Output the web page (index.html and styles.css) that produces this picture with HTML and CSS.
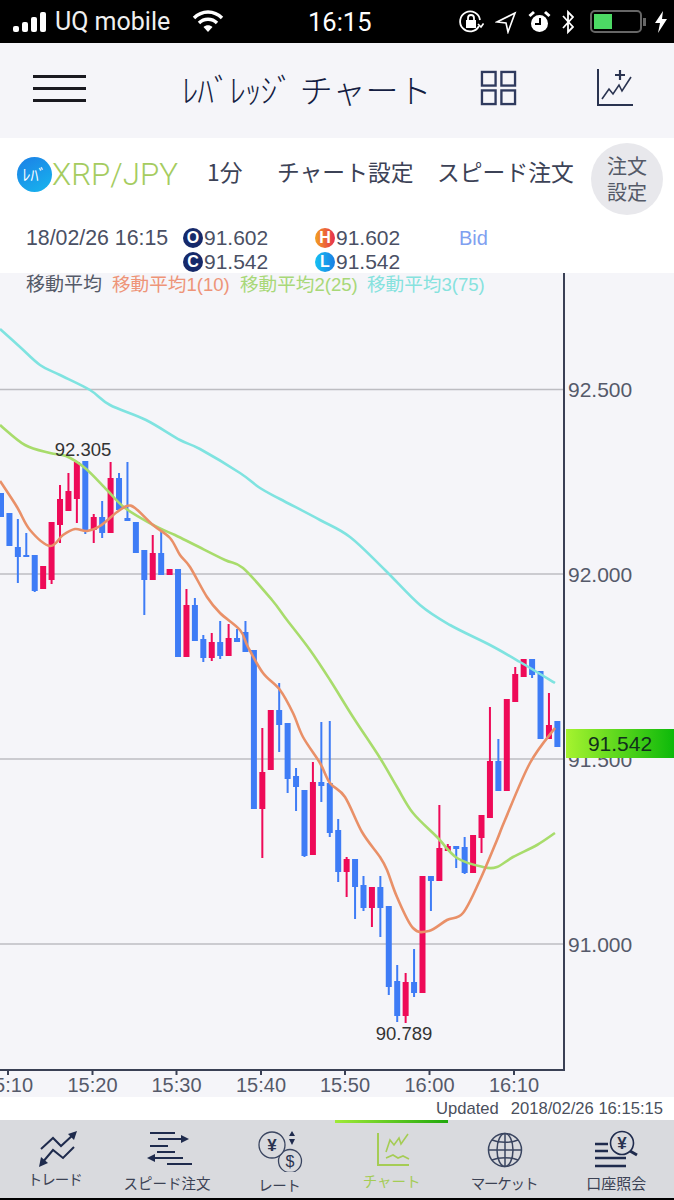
FILE: index.html
```html
<!DOCTYPE html>
<html lang="ja">
<head>
  <meta charset="UTF-8">
  <title>レバレッジチャート</title>
  <meta name="viewport" content="width=device-width, initial-scale=1.0">
  <link rel="stylesheet" href="styles.css">
</head>
<body>
  <div class="status-bar">
    <svg class="signal" width="36" height="24" viewBox="0 0 36 24" fill="#fff">
      <rect x="0" y="17" width="6" height="6" rx="2"/>
      <rect x="9" y="13" width="6" height="10" rx="2"/>
      <rect x="18" y="8" width="6" height="15" rx="2"/>
      <rect x="27" y="3" width="6" height="20" rx="2"/>
    </svg>
    <span class="carrier">UQ mobile</span>
    <svg class="wifi" width="32" height="24" viewBox="0 0 32 24" fill="none" stroke="#fff" stroke-width="3.4">
      <path d="M2 9 C10 1 22 1 30 9"/>
      <path d="M7 14 C12 9 20 9 25 14"/>
      <path d="M16 23 L11.5 18 C14 15.8 18 15.8 20.5 18 Z" fill="#fff" stroke="none"/>
    </svg>
    <span class="clock">16:15</span>
    <div class="status-right">
      <svg width="26" height="26" viewBox="0 0 26 26" fill="none" stroke="#fff" stroke-width="1.8">
        <path d="M21 17 A10 10 0 1 1 22 11"/>
        <path d="M20 15 L23 18 L25.5 14.5" stroke-width="1.6"/>
        <rect x="8" y="11" width="10" height="8" fill="#fff" stroke="none"/>
        <path d="M10 11 V9 A3 3 0 0 1 16 9 V11"/>
      </svg>
      <svg width="22" height="24" viewBox="0 0 22 24" fill="none" stroke="#fff" stroke-width="1.6">
        <path d="M20 3 L2 12 L11 13 L13 22 Z"/>
      </svg>
      <svg width="23" height="24" viewBox="0 0 23 24">
        <circle cx="11.5" cy="13.5" r="8.5" fill="#fff"/>
        <path d="M12 8 V14 H7" fill="none" stroke="#000" stroke-width="2"/>
        <path d="M1.5 6 L6 2 M21.5 6 L17 2" stroke="#fff" stroke-width="3"/>
      </svg>
      <svg width="12" height="26" viewBox="0 0 12 26" fill="none" stroke="#fff" stroke-width="1.8">
        <path d="M1 7 L11 18 L6 23 V3 L11 8 L1 19"/>
      </svg>
      <div class="battery"><div class="battery-level"></div></div>
      <div class="battery-nub"></div>
      <svg width="12" height="22" viewBox="0 0 12 22"><path d="M8 0 L0 12 H5 L3 22 L12 8 H7 Z" fill="#fff"/></svg>
    </div>
  </div>

  <div class="app-header">
    <div class="menu-btn"><span></span><span></span><span></span></div>
    <h1 class="title"><span class="title-half">ﾚﾊﾞﾚｯｼﾞ</span> チャート</h1>
    <svg class="grid-icon" width="37" height="36" viewBox="0 0 38 37" fill="none" stroke="#2f3a5e" stroke-width="2.4">
      <rect x="2" y="2" width="14" height="14"/>
      <rect x="22" y="2" width="14" height="14"/>
      <rect x="2" y="21" width="14" height="14"/>
      <rect x="22" y="21" width="14" height="14"/>
    </svg>
    <svg class="add-chart-icon" width="38" height="38" viewBox="0 0 38 38" fill="none" stroke="#2a3350" stroke-width="2">
      <path d="M2 0 V36 H37"/>
      <path d="M6 30 L13 20 L17 25 L23 16 L26 22 L35 8" stroke-width="1.6"/>
      <path d="M24 1 V11 M19 6 H29" stroke-width="2.2"/>
    </svg>
  </div>

  <div class="toolbar">
    <div class="symbol-row">
      <div class="symbol">
        <span class="symbol-badge">ﾚﾊﾞ</span>
        <span class="symbol-name">XRP/JPY</span>
      </div>
      <span class="tool tool-period">1分</span>
      <span class="tool tool-setting">チャート設定</span>
      <span class="tool tool-speed">スピード注文</span>
      <div class="order-btn">注文<br>設定</div>
    </div>
    <div class="ohlc">
      <span class="ohlc-date">18/02/26 16:15</span>
      <span class="ohlc-val"><i class="badge badge-o">O</i>91.602</span>
      <span class="ohlc-val"><i class="badge badge-h">H</i>91.602</span>
      <span class="ohlc-side">Bid</span>
      <span></span>
      <span class="ohlc-val"><i class="badge badge-o">C</i>91.542</span>
      <span class="ohlc-val"><i class="badge badge-l">L</i>91.542</span>
    </div>
  </div>

  <div class="chart-wrap">
    <svg id="chart" class="chart" width="674" height="824" viewBox="0 273 674 824">
      <g class="grid-lines">
        <line x1="0" x2="564" y1="389.5" y2="389.5"/>
        <line x1="0" x2="564" y1="574" y2="574"/>
        <line x1="0" x2="564" y1="759" y2="759"/>
        <line x1="0" x2="564" y1="944" y2="944"/>
      </g>
      <g id="candles"></g>
      <g id="averages"></g>
      <g class="axis">
        <line x1="564" x2="564" y1="273" y2="1071"/>
        <line x1="0" x2="565" y1="1070" y2="1070"/>
        <line x1="8" x2="8" y1="1070" y2="1075"/>
        <line x1="92.5" x2="92.5" y1="1070" y2="1075"/>
        <line x1="176.5" x2="176.5" y1="1070" y2="1075"/>
        <line x1="261" x2="261" y1="1070" y2="1075"/>
        <line x1="345" x2="345" y1="1070" y2="1075"/>
        <line x1="429.5" x2="429.5" y1="1070" y2="1075"/>
        <line x1="514" x2="514" y1="1070" y2="1075"/>
      </g>
      <g class="price-labels">
        <text x="568" y="397">92.500</text>
        <text x="568" y="582">92.000</text>
        <text x="568" y="767">91.500</text>
        <text x="568" y="952">91.000</text>
      </g>
      <g class="time-labels">
        <text x="8" y="1092">15:10</text>
        <text x="92.5" y="1092">15:20</text>
        <text x="176.5" y="1092">15:30</text>
        <text x="261" y="1092">15:40</text>
        <text x="345" y="1092">15:50</text>
        <text x="429.5" y="1092">16:00</text>
        <text x="514" y="1092">16:10</text>
      </g>
      <g class="peak-labels">
        <text x="83" y="456">92.305</text>
        <text x="404" y="1040">90.789</text>
      </g>
      <g class="legend">
        <text x="26" y="291" class="legend-base">移動平均</text>
        <text x="112" y="291" class="legend-1">移動平均1(10)</text>
        <text x="240" y="291" class="legend-2">移動平均2(25)</text>
        <text x="367" y="291" class="legend-3">移動平均3(75)</text>
      </g>
    </svg>
    <div class="price-tag">91.542</div>
  </div>

  <div class="updated"><span>Updated</span><span>2018/02/26 16:15:15</span></div>

  <div class="tabbar">
    <div class="tab-indicator"></div>
    <div class="tab">
      <svg class="tab-icon" width="60" height="44" viewBox="0 0 60 44" fill="none" stroke="#1f2b4d" stroke-width="2">
        <path d="M16 21 L28 10 L36 18 L49 6"/>
        <path d="M52 3 L43 6 L49 12 Z" fill="#1f2b4d" stroke="none"/>
        <path d="M49 19 L38 30 L28 22 L17 35"/>
        <path d="M14 39 L16 29 L23 35 Z" fill="#1f2b4d" stroke="none"/>
      </svg>
      <span class="tab-label tab-label-1">トレード</span>
    </div>
    <div class="tab">
      <svg class="tab-icon" width="60" height="44" viewBox="0 0 60 44" fill="none" stroke="#1f2b4d" stroke-width="2">
        <path d="M13 5 H38 M21 11 H46 M13 18 H31 M20 24 H38 M16 30 H46 M30 36 H55"/>
        <path d="M52 11 L44 7 V15 Z M10 30 L18 26 V34 Z" fill="#1f2b4d" stroke="none"/>
      </svg>
      <span class="tab-label tab-label-2">スピード注文</span>
    </div>
    <div class="tab">
      <svg class="tab-icon" width="60" height="44" viewBox="0 0 60 44" fill="none" stroke="#3a4560" stroke-width="1.3">
        <circle cx="41" cy="33" r="11.5"/>
        <circle cx="23" cy="17" r="13" fill="#d9dade"/>
        <text x="23" y="23" class="icon-text">¥</text>
        <text x="41" y="39" class="icon-text icon-text-light">$</text>
        <path d="M43 3 L46 8 H40 Z M43 17 L46 11 H40 Z" fill="#1f2b4d" stroke="none"/>
      </svg>
      <span class="tab-label tab-label-3">レート</span>
    </div>
    <div class="tab">
      <svg class="tab-icon" width="60" height="44" viewBox="0 0 60 44" fill="none" stroke="#a5cc55" stroke-width="2">
        <path d="M16 5 V37 H47"/>
        <path d="M24 24 L28 12 L32 17 L37 10 L39 16 L46 6" stroke-width="1.6"/>
        <path d="M24 30 L31 27 L36 30 L41 28 L47 31" stroke-width="1.6"/>
      </svg>
      <span class="tab-label tab-label-4 tab-active">チャート</span>
    </div>
    <div class="tab">
      <svg class="tab-icon" width="60" height="44" viewBox="0 0 60 44" fill="none" stroke="#3a4560" stroke-width="1.5">
        <circle cx="31" cy="22" r="16.5"/>
        <ellipse cx="31" cy="22" rx="8" ry="16.5"/>
        <path d="M31 5.5 V38.5 M14.5 22 H47.5"/>
        <path d="M18 12 C25 15 37 15 44 12 M18 32 C25 29 37 29 44 32"/>
      </svg>
      <span class="tab-label tab-label-5">マーケット</span>
    </div>
    <div class="tab">
      <svg class="tab-icon" width="60" height="44" viewBox="0 0 60 44" fill="none" stroke="#1f2b4d" stroke-width="2">
        <path d="M9 16 H22 M9 23 H22 M9 30 H40 M9 38 H40" stroke-width="2.4"/>
        <circle cx="36" cy="15" r="11.5" stroke-width="1.6"/>
        <path d="M44 23 L51 27" stroke-width="3"/>
        <text x="36" y="21" class="icon-text">¥</text>
      </svg>
      <span class="tab-label tab-label-6">口座照会</span>
    </div>
  </div>

  <script src="chart.js"></script>
</body>
</html>
```

FILE: styles.css
```css
* {
  box-sizing: border-box;
}
html, body {
  margin: 0;
  padding: 0;
}
body {
  width: 674px;
  height: 1200px;
  overflow: hidden;
  font-family: "Liberation Sans", "Noto Sans CJK JP", sans-serif;
  background: white;
  color: #4a5060;
}

/* status bar */
.status-bar {
  height: 43px;
  background: black;
  color: white;
  display: flex;
  align-items: center;
  padding-left: 13px;
}
.signal {
  flex: none;
  margin-top: -2px;
}
.carrier {
  font-family: Roboto, "Liberation Sans", sans-serif;
  font-size: 25px;
  margin-left: 6px;
  width: 122px;
  color: #f0f0f0;
}
.wifi {
  margin-left: 15px;
  margin-top: -2px;
}
.clock {
  font-family: Roboto, "Liberation Sans", sans-serif;
  font-size: 25.5px;
  margin-left: 84px;
  width: 66px;
}
.status-right {
  display: flex;
  align-items: center;
  margin-left: 84px;
  gap: 11px;
}
.battery {
  width: 52px;
  height: 23px;
  border: 2px solid #666;
  border-radius: 5px;
  padding: 2px;
  margin-left: 5px;
}
.battery-level {
  width: 18px;
  height: 15px;
  background: #4cd964;
}
.battery-nub {
  width: 3px;
  height: 8px;
  background: #666;
  margin-left: -10px;
}
.status-right svg:last-child {
  margin-left: -2px;
}

/* header */
.app-header {
  height: 95px;
  background: #f5f5f9;
  display: flex;
  align-items: center;
  padding-bottom: 3px;
}
.menu-btn {
  width: 53px;
  margin-left: 33px;
  margin-top: -2px;
  display: flex;
  flex-direction: column;
  gap: 9px;
}
.menu-btn span {
  height: 3px;
  background: #1a1a20;
}
.title {
  font-family: "Noto Sans CJK JP", sans-serif;
  font-size: 33px;
  font-weight: 300;
  color: #141d42;
  margin: 0 0 0 96px;
  width: 298px;
  white-space: nowrap;
}
.title-half {
  letter-spacing: -1px;
}
.grid-icon {
  flex: none;
  margin-top: -3px;
}
.add-chart-icon {
  flex: none;
  margin-left: 79px;
  margin-top: -3px;
}

/* symbol and ohlc */
.toolbar {
  height: 135px;
  background: white;
}
.symbol-row {
  height: 81px;
  display: flex;
  align-items: center;
  padding-left: 17px;
  position: relative;
}
.symbol {
  display: flex;
  align-items: center;
  width: 190px;
  margin-top: -8px;
}
.symbol-badge {
  width: 35px;
  height: 35px;
  border-radius: 50%;
  background: linear-gradient(150deg, #1c7fe6, #17b6ee);
  color: white;
  font-family: "Noto Sans CJK JP", sans-serif;
  font-size: 16px;
  line-height: 35px;
  text-align: center;
}
.symbol-name {
  font-family: Roboto, "Liberation Sans", sans-serif;
  font-weight: 300;
  font-size: 31.3px;
  color: #a5cc5f;
}
.tool {
  font-family: "Noto Sans CJK JP", sans-serif;
  font-size: 22.8px;
  color: #3c4256;
  margin-top: -14px;
  white-space: nowrap;
}
.tool-period {
  width: 70px;
}
.tool-setting {
  width: 160px;
}
.tool-speed {
  width: 154px;
}
.order-btn {
  width: 72px;
  height: 72px;
  border-radius: 50%;
  background: #e8e8ec;
  font-family: "Noto Sans CJK JP", sans-serif;
  font-size: 20px;
  line-height: 26px;
  color: #555a68;
  text-align: center;
  padding-top: 10px;
  flex: none;
}
.ohlc {
  display: grid;
  grid-template-columns: 157px 132px 144px auto;
  grid-auto-rows: 24px;
  padding-left: 26px;
  padding-top: 7px;
  font-size: 21px;
  line-height: 24px;
  color: #4a5064;
}
.ohlc-date {
  font-size: 21.3px;
  white-space: nowrap;
}
.ohlc-val {
  display: flex;
  align-items: center;
}
.ohlc-side {
  color: #7fa0f0;
  font-size: 20px;
}
.badge {
  width: 20px;
  height: 20px;
  border-radius: 50%;
  font-style: normal;
  font-weight: bold;
  font-size: 16px;
  line-height: 20px;
  text-align: center;
  color: white;
  margin-right: 1px;
}
.badge-o {
  background: #16296a;
}
.badge-h {
  background: linear-gradient(90deg, #f2a020, #e62e50);
}
.badge-l {
  background: linear-gradient(90deg, #16c0f2, #1a7fe4);
}

/* chart */
.chart-wrap {
  height: 824px;
  background: #f5f5f9;
  position: relative;
}
.chart {
  display: block;
}
.grid-lines line {
  stroke: #bdbdc2;
  stroke-width: 1.5;
}
.axis line {
  stroke: #3a4055;
  stroke-width: 2;
}
.price-labels text {
  font-size: 21px;
  fill: #555a6a;
}
.time-labels text {
  font-size: 20px;
  fill: #555a6a;
  text-anchor: middle;
}
.peak-labels text {
  font-size: 18.5px;
  fill: #333;
  text-anchor: middle;
}
.legend text {
  font-family: "Liberation Sans", "Noto Sans CJK JP", sans-serif;
  font-size: 18.6px;
}
.legend .legend-base {
  font-size: 19px;
  fill: #555a68;
}
.legend-1 {
  fill: #ee9478;
}
.legend-2 {
  fill: #a8d878;
}
.legend-3 {
  fill: #86e2de;
}
.price-tag {
  position: absolute;
  left: 566px;
  top: 456px;
  width: 108px;
  height: 29px;
  background: linear-gradient(90deg, #a6f32f, #0db90a);
  font-size: 21px;
  line-height: 30px;
  text-align: center;
  color: #11301c;
}

/* updated line */
.updated {
  height: 23px;
  display: flex;
  justify-content: flex-end;
  align-items: center;
  gap: 12px;
  padding-right: 11px;
  font-size: 16.6px;
  color: #4a4f5c;
}

/* tabs */
.tabbar {
  height: 80px;
  background: #d9dade;
  border-bottom: 2px solid black;
  display: flex;
  position: relative;
}
.tab-indicator {
  position: absolute;
  left: 335px;
  top: 0;
  width: 113px;
  height: 3px;
  background: linear-gradient(90deg, #a0ea38, #20a80c);
}
.tab {
  flex: 1;
  display: flex;
  flex-direction: column;
  align-items: center;
  padding-top: 8px;
  padding-right: 3px;
}
.tab-icon {
  flex: none;
}
.tab-label {
  font-family: "Noto Sans CJK JP", sans-serif;
  font-size: 14.5px;
  line-height: 18px;
  color: #3c4254;
  white-space: nowrap;
}
.tab-label-1 {
  margin-top: -2px;
  letter-spacing: -1px;
}
.tab-label-2 {
  margin-top: 2px;
}
.tab-label-5 {
  margin-top: 2px;
  letter-spacing: -1.2px;
}
.tab-label-6 {
  margin-top: 2px;
  font-size: 15px;
}
.tab-label-3 {
  margin-top: 4px;
  letter-spacing: -0.5px;
}
.tab-active {
  color: #a5cc55;
}
.icon-text {
  font-family: "Liberation Sans", sans-serif;
  font-size: 17px;
  fill: #2a3350;
  stroke: none;
  text-anchor: middle;
  font-weight: bold;
}
.icon-text-light {
  font-weight: normal;
  font-size: 16px;
}
```

FILE: chart.js
```js
// candle: color, body top, body bottom, wick top, wick bottom (page y values)
const candles = [
  ["b",493,517],["b",513,546],["b",547,557,519,583],["b",555,557,533,557],["b",555,591,555,592],
  ["r",566,589],["r",522,580,522,584],["r",499,525,485,543],["r",491,511,473,511],["r",462,499,462,523],
  ["b",461,530,461,534],["r",517,530,514,543],["b",517,533,501,538],["r",478,533,462,533],["b",478,510,473,510],
  ["b",518,521,462,521],["b",522,553],["b",550,580,550,615],["r",553,580,535,580],["b",553,575,528,575],
  ["r",569,575],["b",569,657],["r",605,657,589,657],["b",605,641,598,641],["b",639,658,635,662],
  ["r",642,658,633,661],["b",642,656,621,659],["r",638,656,624,656],["b",638,642,629,642],["b",632,652,621,652],
  ["b",650,809],["r",772,809,728,858],["r",710,770],["b",710,725,683,752],["b",723,779,723,793],
  ["b",776,787,768,811],["b",790,856,790,857],["r",782,855,762,855],["b",782,786,722,802],["b",783,833,721,837],
  ["b",830,872,819,882],["r",859,872,857,897],["b",859,887,859,919],["b",885,908,876,911],["r",887,908,887,927],
  ["b",887,908,876,937],["b",906,987,906,995],["b",981,1016,965,1022],["r",982,1016,973,1023],["b",982,993,949,997],
  ["r",876,993],["b",876,881,876,911],["r",848,881,805,881],["r",846,851,844,851],["b",846,849,846,868],
  ["b",847,873,837,874],["r",835,873],["r",815,838,815,853],["r",761,818,707,818],["b",761,791,739,791],
  ["r",699,791],["r",674,702,667,702],["r",659,677],["b",659,675,659,678],["b",671,739],
  ["r",725,739,693,739],["b",721,747]
];

const averages = [
  { color: "#7fe3e0", points: [[0,329],[20,347],[40,365],[60,375],[90,390],[110,405],[146,420],[180,440],[200,449],[240,473],[260,488],[280,499],[320,520],[350,537],[385,570],[420,605],[450,625],[490,645],[520,662],[555,683]] },
  { color: "#a8dc6c", points: [[0,425],[25,445],[50,453],[66,456],[85,468],[107,490],[125,508],[155,526],[175,535],[195,545],[225,560],[243,568],[272,600],[287,620],[310,650],[330,680],[353,717],[380,758],[397,787],[413,813],[437,837],[457,858],[483,867],[497,867],[513,857],[537,845],[555,833]] },
  { color: "#e99068", points: [[0,481],[17,507],[30,530],[50,546],[63,535],[75,529],[87,531],[100,526],[117,512],[127,506],[135,508],[153,525],[170,538],[180,555],[190,567],[207,597],[220,613],[240,630],[248,647],[263,673],[280,690],[293,713],[303,737],[320,763],[330,783],[345,797],[362,832],[380,857],[387,870],[397,897],[413,928],[429,931],[447,920],[463,913],[480,880],[497,840],[505,820],[530,763],[555,728]] }
];

const svgNS = "http://www.w3.org/2000/svg";

function addEl(parent, name, attrs) {
  const el = document.createElementNS(svgNS, name);
  Object.keys(attrs).forEach(key => el.setAttribute(key, attrs[key]));
  parent.appendChild(el);
}

// rounds the corners off a list of points with catmull-rom curves
function smoothPath(pts) {
  let d = "M" + pts[0][0] + " " + pts[0][1];
  for (let i = 0; i < pts.length - 1; i++) {
    const p0 = pts[Math.max(i - 1, 0)];
    const p1 = pts[i];
    const p2 = pts[i + 1];
    const p3 = pts[Math.min(i + 2, pts.length - 1)];
    const c1x = p1[0] + (p2[0] - p0[0]) / 6;
    const c1y = p1[1] + (p2[1] - p0[1]) / 6;
    const c2x = p2[0] - (p3[0] - p1[0]) / 6;
    const c2y = p2[1] - (p3[1] - p1[1]) / 6;
    d += " C" + c1x + " " + c1y + " " + c2x + " " + c2y + " " + p2[0] + " " + p2[1];
  }
  return d;
}

const candleGroup = document.getElementById("candles");
candles.forEach((c, i) => {
  const x = 1 + 8.43 * i;
  const fill = c[0] === "b" ? "#3e7cf6" : "#ee0a58";
  const top = c.length > 3 ? c[3] : c[1];
  const bottom = c.length > 3 ? c[4] : c[2];
  addEl(candleGroup, "rect", { x: x - 1, y: top, width: 2, height: bottom - top, fill: fill });
  addEl(candleGroup, "rect", { x: x - 3, y: c[1], width: 6, height: c[2] - c[1], fill: fill });
});

const averageGroup = document.getElementById("averages");
averages.forEach(a => {
  addEl(averageGroup, "path", {
    d: smoothPath(a.points),
    fill: "none",
    stroke: a.color,
    "stroke-width": 2.6
  });
});
```
